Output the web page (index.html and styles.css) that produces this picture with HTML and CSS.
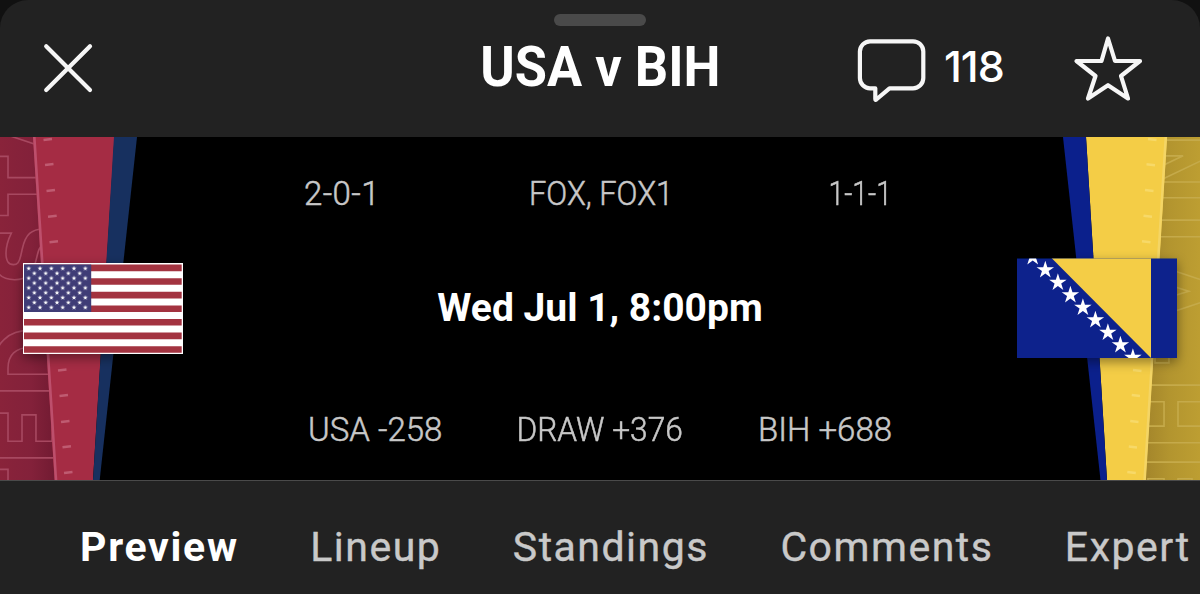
FILE: index.html
```html
<!DOCTYPE html>
<html lang="en">
<head>
<meta charset="utf-8">
<title>USA v BIH</title>
<link rel="stylesheet" href="styles.css">
</head>
<body>
<div class="sheet">
  <header class="header">
    <div class="handle"></div>
    <svg class="close" width="52" height="52" viewBox="42 42 52 52"><path d="M46.2 46.2 90 90M90 46.2 46.2 90"/></svg>
    <h1 class="title"><span class="fit">USA v BIH</span></h1>
    <div class="actions">
      <svg class="bubble" width="70" height="66" viewBox="857 37 70 66"><path d="M870 41.3H913a10.3 10.3 0 0 1 10.3 10.3V78a10.3 10.3 0 0 1-10.3 10.3H889.500L876.300 99.500Q875.300 100.300 875.300 99V88.300H870A10.300 10.300 0 0 1 859.900 78V51.600A10.300 10.300 0 0 1 870 41.300Z"/></svg>
      <span class="count">118</span>
      <svg class="fav" width="72" height="68" viewBox="1072 35 72 68"><path d="M1108 38.500 1115 61H1140L1121 76 1128 98.500 1108 85.200 1088 98.500 1095.500 76 1076.500 61H1101.500Z"/></svg>
    </div>
  </header>

  <main class="stage">
    <svg class="side" width="200" height="343" viewBox="0 137 200 343">
      <defs>
        <linearGradient id="crimson" x1="0" x2="1" y1="0" y2="0"><stop offset="0" stop-color="#89233a"/><stop offset=".55" stop-color="#83213a"/><stop offset="1" stop-color="#701a31"/></linearGradient>
        <filter id="shade" x="-20%" y="-20%" width="140%" height="150%"><feDropShadow dx="0" dy="4" stdDeviation="6" flood-color="#000" flood-opacity=".42"/></filter>
        <path id="star" d="M0-1 .2245-.309.951-.309.363.118.588.809 0 .382-.588.809-.363.118-.951-.309-.2245-.309Z" fill="#fff"/>
        <pattern id="starsWide" patternUnits="userSpaceOnUse" x="23.030" y="265.870" width="11.330" height="9.750"><use href="#star" transform="translate(5.670 2.630) scale(2.600)"/></pattern>
        <pattern id="starsNarrow" patternUnits="userSpaceOnUse" x="28.700" y="270.750" width="11.330" height="9.750"><use href="#star" transform="translate(5.670 2.630) scale(2.600)"/></pattern>
      </defs>
      <path d="M0 137H36L57 480H0Z" fill="url(#crimson)"/>
      <text class="ghost ghost-red" transform="translate(66 480) rotate(-90)" x="-49 14 81 194 264 325">TEDSTA</text>
      <path d="M33 137H114.500L93 480H54.500Z" fill="#a52c44"/>
      <path d="M114 137H137L99.700 480H93Z" fill="#17305f"/>
      <path d="M34.300 137 56 480" stroke="#bd4f6c" stroke-width="2.600"/>
      <path d="M43.500 140 52 139M45 165 53.500 164M46.500 191 55 190M48 216.800 56.700 215.800M49.500 242.300 58 241.300M58 370.500 66.500 369.500M59.500 396 68 395M61 422 69.500 421M62.500 447.200 71 446.200M64 473 72.500 472" stroke="#bf5b71" stroke-width="2.600"/>
      <g filter="url(#shade)"><path d="M23 263H183V354H23Z" fill="#fff"/></g>
      <path d="M24 267.900H181.700M24 281.500H181.700M24 295.100H181.700M24 308.700H181.700M24 322.300H181.700M24 335.900H181.700M24 349.500H181.700" stroke="#a33340" stroke-width="6.600"/>
      <path d="M24 264.600H91.200V312H24Z" fill="#3f3c76"/>
      <path d="M23.030 265.870H91V310.500H23.030Z" fill="url(#starsWide)"/>
      <path d="M28.700 270.750H85.300V309.700H28.700Z" fill="url(#starsNarrow)"/>
    </svg>

    <section class="info">
      <div class="row records"><span class="win">2-0-1</span><span class="network">FOX, FOX1</span><span class="loss">1-1-1</span></div>
      <div class="kickoff"><span>Wed Jul 1, 8:00pm</span></div>
      <div class="row odds"><span>USA -258</span><span class="draw">DRAW +376</span><span>BIH +688</span></div>
    </section>

    <svg class="side" width="200" height="343" viewBox="1000 137 200 343">
      <defs>
        <linearGradient id="mustard" x1="0" x2="1" y1="0" y2="0"><stop offset="0" stop-color="#a0822a"/><stop offset=".5" stop-color="#b3952f"/><stop offset="1" stop-color="#bd9e32"/></linearGradient>
        <clipPath id="flagBox"><path d="M1017 258.500H1177V358H1017Z"/></clipPath>
      </defs>
      <path d="M1140 137H1200V480H1140Z" fill="url(#mustard)"/>
      <text class="ghost ghost-gold" transform="translate(1134 137) rotate(90)" x="-5 75 120 194 240 317">NIA-HE</text>
      <path d="M1086 137H1167L1145.500 480H1107Z" fill="#f4cd46"/>
      <path d="M1063 137H1086L1107 480H1100.500Z" fill="#0b208c"/>
      <path d="M1165.800 137 1144.600 480" stroke="#f4d565" stroke-width="2.600"/>
      <path d="M1148 139 1156.500 140M1146.500 164.200 1155 165.200M1145 190 1153.500 191M1143.500 215.700 1152 216.700M1142 241.200 1150.500 242.200M1133 370 1141.500 371M1131.700 395 1140 396M1130.200 421 1138.500 422M1128.800 446.500 1137 447.500M1127.300 472 1135.800 473" stroke="#f7d968" stroke-width="2.600"/>
      <g filter="url(#shade)"><path d="M1017 258.500H1177V358H1017Z" fill="#0b208c"/></g>
      <g clip-path="url(#flagBox)">
        <path d="M1051.500 258H1151V358Z" fill="#f4cd46"/>
        <use href="#star" transform="translate(1032.700 257) scale(9.200)"/>
        <use href="#star" transform="translate(1045.300 270) scale(9.200)"/>
        <use href="#star" transform="translate(1057.900 282.500) scale(9.200)"/>
        <use href="#star" transform="translate(1070.400 295) scale(9.200)"/>
        <use href="#star" transform="translate(1082.900 307.500) scale(9.200)"/>
        <use href="#star" transform="translate(1095.400 320) scale(9.200)"/>
        <use href="#star" transform="translate(1107.900 332.500) scale(9.200)"/>
        <use href="#star" transform="translate(1120.400 345) scale(9.200)"/>
        <use href="#star" transform="translate(1132.900 357.500) scale(9.200)"/>
      </g>
    </svg>
  </main>

  <nav class="tabs">
    <a class="tab active">Preview</a>
    <a class="tab">Lineup</a>
    <a class="tab">Standings</a>
    <a class="tab">Comments</a>
    <a class="tab">Expert</a>
  </nav>
</div>
</body>
</html>
```

FILE: styles.css
```css
* { box-sizing: border-box; }
body { margin: 0; background: #111; color: #fff; font-family: Roboto, "Liberation Sans", sans-serif; }
.sheet { display: flex; flex-direction: column; width: 1200px; height: 594px; overflow: hidden; border-radius: 28px 28px 0 0; background: #222; }
.header { position: relative; display: grid; grid-template-columns: 1fr auto 1fr; align-items: center; height: 137px; padding: 0 56px 0 42px; }
.handle { position: absolute; left: 554px; top: 14px; width: 92px; height: 12px; border-radius: 6px; background: #4a4a4a; }
.header svg { display: block; fill: none; stroke: #f6f6f6; stroke-width: 4.2; stroke-linecap: round; stroke-linejoin: round; }
.close { margin-bottom: 1px; }
.title { width: 240px; margin: 0 0 3px 14px; font-size: 56px; line-height: 66px; font-weight: 700; white-space: nowrap; display: flex; justify-content: center; }
.fit { transform: scaleX(.935); }
.actions { display: flex; align-items: center; justify-content: flex-end; margin-top: 1px; }
.bubble { margin-top: 2px; }
.count { width: 78px; padding-left: 17px; margin-bottom: 7px; font: 500 43px/52px Inter, sans-serif; letter-spacing: -1px; }
.fav { margin-left: 67px; }
.stage { display: flex; height: 343px; background: #000; }
.side { display: block; flex: none; }
.info { flex: 1; display: flex; flex-direction: column; justify-content: space-between; padding: 37px 109px 30px 104px; }
.row { display: grid; grid-template-columns: 1fr auto 1fr; margin-right: -1px; font-size: 33px; line-height: 40px; font-weight: 300; color: #c8c8c8; -webkit-text-stroke: .5px #c8c8c8; white-space: nowrap; }
.row span:last-child { text-align: right; }
.odds { padding-left: 4px; }
.win { letter-spacing: .4px; }
.network { transform: translateX(3px) scaleX(.935); }
.draw { transform: scaleX(.96); }
.loss { transform: scaleX(.86); transform-origin: right; }
.kickoff { margin: -9px 0 0 5px; text-align: center; font-size: 39px; line-height: 46px; font-weight: 700; white-space: nowrap; }
.tabs { display: flex; align-items: center; gap: 71.5px; height: 114px; border-top: 1px solid #4a4a4a; padding: 18px 0 0 80px; font-size: 41px; line-height: 48px; color: #c9c9c9; white-space: nowrap; overflow: hidden; letter-spacing: 1.5px; -webkit-text-stroke: .4px #c9c9c9; }
.tab { flex: none; }
.active { color: #fff; font-weight: 700; letter-spacing: 1.7px; -webkit-text-stroke: 0; }
.ghost { font: bold 98px "DejaVu Sans Condensed", "DejaVu Sans", sans-serif; font-stretch: condensed; fill: none; stroke-width: 1.6; }
.ghost-red { stroke: #a74860; }
.ghost-gold { stroke: #c5aa4a; }
```
